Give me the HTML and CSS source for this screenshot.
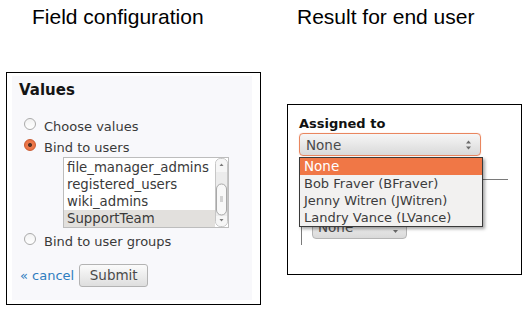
FILE: index.html
```html
<!DOCTYPE html>
<html lang="en">
<head>
<meta charset="utf-8">
<title>Field configuration / Result for end user</title>
<link rel="stylesheet" href="styles.css">
</head>
<body>
<div class="page">
  <section class="col col-config">
    <h1 class="title title-config">Field configuration</h1>
    <div class="frame frame-config">
      <div class="panel">
        <h2 class="panel-title">Values</h2>
        <div class="option option-first"><span class="radio"></span><span>Choose values</span></div>
        <div class="option"><span class="radio checked"></span><span>Bind to users</span></div>
        <div class="listbox">
          <div class="listbox-view">
            <div class="listbox-items">
              <div class="lb-item">newsletter_admins</div>
              <div class="lb-item">file_manager_admins</div>
              <div class="lb-item">registered_users</div>
              <div class="lb-item">wiki_admins</div>
              <div class="lb-item selected">SupportTeam</div>
            </div>
          </div>
          <svg class="scrollbar" width="13" height="69" viewBox="0 0 13 69">
            <rect x="0.5" y="0.5" width="12" height="68" rx="5" fill="#ececec" stroke="#c6c6c6"/>
            <path d="M1 6 Q1 1 6.5 1 Q12 1 12 6 V14 H1 Z" fill="#f6f6f6"/>
            <path d="M4.5 8 L6.5 5.5 L8.5 8 Z" fill="#7a7a7a"/>
            <rect x="1.5" y="26" width="10" height="31" rx="5" fill="#f8f8f8" stroke="#a8a8a8"/>
            <path d="M5 39 H8 M5 41 H8 M5 43 H8" stroke="#9a9a9a" stroke-width="0.8"/>
            <path d="M1 58 H12 V63 Q12 68 6.5 68 Q1 68 1 63 Z" fill="#f6f6f6"/>
            <path d="M4.5 61 L6.5 63.5 L8.5 61 Z" fill="#7a7a7a"/>
          </svg>
        </div>
        <div class="option option-groups"><span class="radio"></span><span>Bind to user groups</span></div>
        <div class="actions">
          <a class="cancel" href="#">« cancel</a>
          <button class="btn" type="button">Submit</button>
        </div>
      </div>
    </div>
  </section>
  <section class="col col-result">
    <h1 class="title title-result">Result for end user</h1>
    <div class="frame frame-result">
      <div class="field-label">Assigned to</div>
      <div class="select select-focus">
        <span class="select-value">None</span>
        <svg class="select-arrows" width="7" height="12" viewBox="0 0 7 12">
          <path d="M1 4.5 L3.5 1.5 L6 4.5 Z" fill="#6a6a6a"/>
          <path d="M1 7.5 L3.5 10.5 L6 7.5 Z" fill="#6a6a6a"/>
        </svg>
      </div>
      <div class="group">
        <div class="select select-small">
          <span class="select-value">None</span>
          <svg class="select-arrow-down" width="7" height="5" viewBox="0 0 7 5">
            <path d="M1 1 L3.5 4 L6 1 Z" fill="#6a6a6a"/>
          </svg>
        </div>
      </div>
      <ul class="dropdown">
        <li class="dd-item active">None</li>
        <li class="dd-item">Bob Fraver (BFraver)</li>
        <li class="dd-item">Jenny Witren (JWitren)</li>
        <li class="dd-item">Landry Vance (LVance)</li>
      </ul>
    </div>
  </section>
</div>
</body>
</html>
```
FILE: styles.css
```css
html, body {
  margin: 0;
  padding: 0;
  background: #ffffff;
}

body {
  width: 532px;
  height: 317px;
  overflow: hidden;
  font-family: "DejaVu Sans", "Noto Sans", sans-serif;
  color: #3c3c3c;
}

.page {
  display: flex;
  align-items: flex-start;
  padding-left: 6px;
}

.col {
  display: flex;
  flex-direction: column;
}

.col-config {
  width: 255px;
}

.col-result {
  width: 235px;
  margin-left: 26px;
}

.title {
  margin: 0;
  padding-top: 5px;
  font-family: "Liberation Sans", Arial, sans-serif;
  font-weight: normal;
  font-size: 21px;
  line-height: 24px;
  color: #000000;
  white-space: nowrap;
}

.title-config {
  margin-left: 26px;
}

.title-result {
  margin-left: 10px;
}

.frame {
  border: 1px solid #000000;
  background: #ffffff;
  box-sizing: border-box;
}

/* ---------- Field configuration ---------- */

.frame-config {
  margin-top: 43px;
  width: 255px;
  height: 233px;
  padding: 3px 8px 4px 5px;
}

.panel {
  height: 224px;
  background: #f8f8fb;
  padding: 5px 0 0 7px;
  box-sizing: border-box;
}

.panel-title {
  margin: 0 0 18px 0;
  font-size: 15px;
  line-height: 18px;
  font-weight: bold;
  color: #141414;
}

.option {
  display: flex;
  align-items: flex-start;
  height: 20px;
  padding-left: 5px;
  font-size: 13px;
  line-height: 20px;
  color: #3a3a3a;
  white-space: nowrap;
}

.option + .option {
  margin-top: 1px;
}

.radio {
  flex: none;
  width: 12px;
  height: 12px;
  margin-top: 1px;
  margin-right: 8px;
  box-sizing: border-box;
  border-radius: 50%;
  border: 1px solid #aaaaaa;
  background: linear-gradient(#f2f2f2, #ffffff);
  position: relative;
}

.radio.checked {
  border-color: #c95a30;
  background: radial-gradient(circle at 50% 50%, #5a3325 0, #5a3325 1.6px, #ee7a4c 2.4px, #e86a3c 100%);
}

.listbox {
  display: flex;
  width: 166px;
  height: 71px;
  margin-top: -1px;
  margin-left: 44px;
  border: 1px solid #bdbdbd;
  background: #ffffff;
  box-sizing: border-box;
}

.listbox-view {
  flex: 1;
  overflow: hidden;
}

.listbox-items {
  margin-top: -16px;
}

.lb-item {
  height: 17px;
  padding-left: 3px;
  font-size: 13.3px;
  line-height: 17px;
  color: #3a3a3a;
  white-space: nowrap;
}

.lb-item.selected {
  background: #e2e0dd;
}

.scrollbar {
  flex: none;
  display: block;
}

.option-groups {
  margin-top: 4px;
}

.actions {
  display: flex;
  align-items: baseline;
  margin-top: 12px;
  padding-left: 1px;
}

.cancel {
  font-size: 13px;
  color: #2f7dbf;
  text-decoration: none;
}

.btn {
  margin-left: 5px;
  width: 69px;
  height: 23px;
  padding: 0;
  border: 1px solid #b3b3b3;
  border-radius: 3px;
  background: linear-gradient(#fbfbfb, #dedede);
  font-family: "DejaVu Sans", "Noto Sans", sans-serif;
  font-size: 13.5px;
  line-height: 21px;
  color: #4a4a4a;
}

/* ---------- Result for end user ---------- */

.frame-result {
  position: relative;
  margin-top: 75px;
  width: 235px;
  height: 171px;
  padding: 11px 0 0 11px;
}

.field-label {
  font-size: 13px;
  line-height: 16px;
  font-weight: bold;
  color: #111111;
}

.select {
  display: flex;
  align-items: center;
  justify-content: space-between;
  box-sizing: border-box;
  border-radius: 4px;
  background: linear-gradient(#f6f6f6, #d9d9d9);
  font-size: 13.5px;
  color: #4a4a4a;
}

.select-focus {
  margin-top: 1px;
  width: 182px;
  height: 23px;
  border: 1px solid #e9865f;
  box-shadow: 0 0 1px rgba(233, 134, 95, 0.6);
  padding: 0 8px 0 6px;
}

.select-arrows {
  display: block;
}

.group {
  margin-top: 23px;
  margin-left: 2px;
  width: 207px;
  height: 66px;
  border-top: 1px solid #7a7a7a;
  border-left: 1px solid #7a7a7a;
  box-sizing: border-box;
  padding: 38px 0 0 10px;
}

.select-small {
  width: 95px;
  height: 21px;
  border: 1px solid #b5b5b5;
  padding: 0 7px 3px 5px;
  align-items: flex-end;
  line-height: 16px;
}

.select-arrow-down {
  display: block;
  margin-bottom: 1px;
}

.dropdown {
  position: absolute;
  left: 11px;
  top: 52px;
  width: 184px;
  margin: 0;
  padding: 0;
  list-style: none;
  border: 1px solid #3a3a3a;
  background: #f2f1f0;
  box-sizing: border-box;
  box-shadow: 2px 2px 3px rgba(0, 0, 0, 0.35);
}

.dd-item {
  height: 17px;
  padding-left: 4px;
  font-size: 13px;
  line-height: 17px;
  color: #3c3c3c;
  white-space: nowrap;
}

.dd-item.active {
  background: #f07746;
  color: #ffffff;
  font-size: 13.5px;
}
```
